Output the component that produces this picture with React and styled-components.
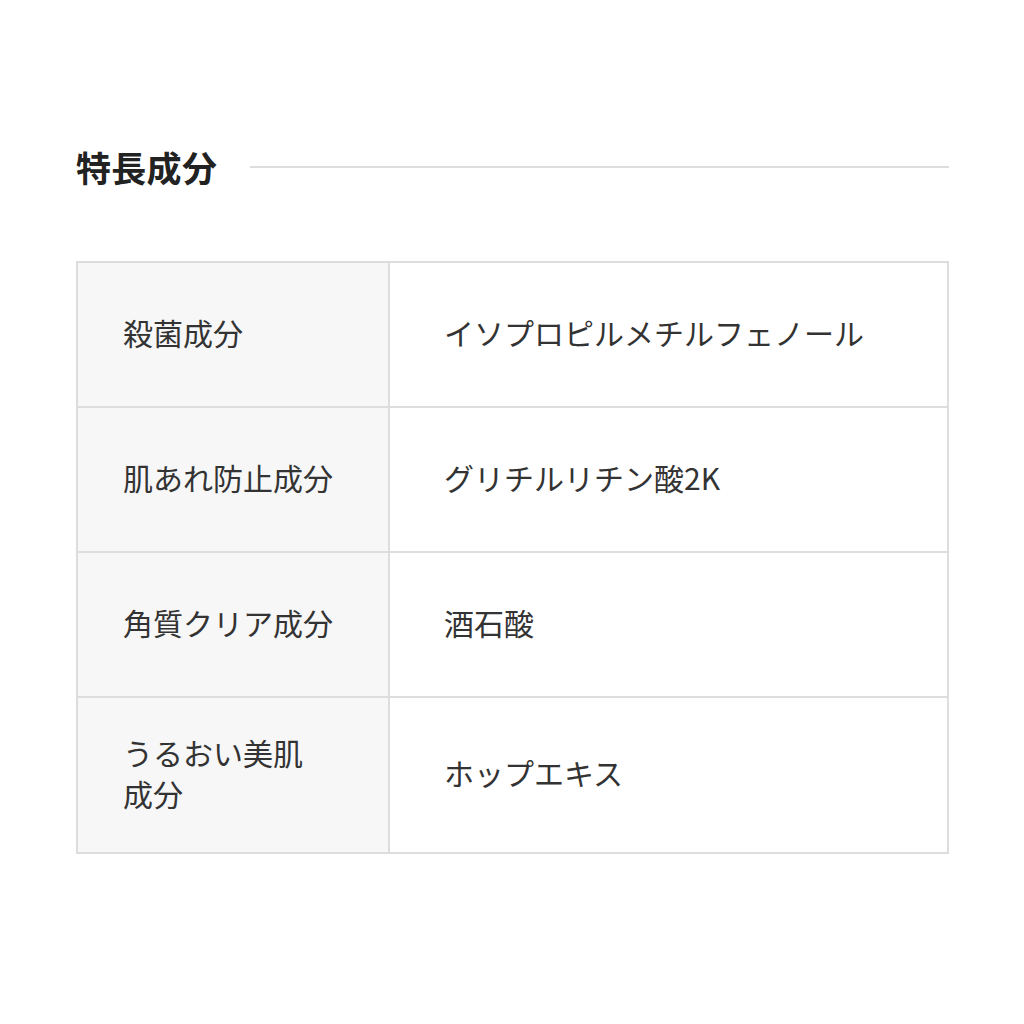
import React from "react";
import styled, { createGlobalStyle } from "styled-components";

const GlobalStyle = createGlobalStyle`
  html, body {
    margin: 0;
    padding: 0;
    background: #fff;
  }
  body {
    font-family: "Noto Sans CJK JP", "Noto Sans", sans-serif;
    color: #333;
  }
`;

// label parts: the last part is kept on one line (成分 never splits)
const ingredients = [
  { label: ["殺菌成分"], value: "イソプロピルメチルフェノール" },
  { label: ["肌あれ防止", "成分"], value: "グリチルリチン酸2K" },
  { label: ["角質クリア", "成分"], value: "酒石酸" },
  { label: ["うるおい美肌", "成分"], value: "ホップエキス" },
];

function App() {
  return (
    <>
      <GlobalStyle />
      <Section>
        <TitleRow>
          <Title>特長成分</Title>
          <Rule />
        </TitleRow>
        <Table>
          {ingredients.map((item) => (
            <Row key={item.value}>
              <Label>
                <span>
                  {item.label.map((part) => (
                    <Chunk key={part}>{part}</Chunk>
                  ))}
                </span>
              </Label>
              <Value>{item.value}</Value>
            </Row>
          ))}
        </Table>
      </Section>
    </>
  );
}

export default App;

const Section = styled.section`
  padding: 140px 75px 0 76px;
`;

const TitleRow = styled.div`
  display: flex;
  align-items: center;
  gap: 33px;
  height: 52px;
`;

const Title = styled.h2`
  margin: 0;
  font-size: 35px;
  font-weight: 700;
  color: #222;
  letter-spacing: 0.3px;
  white-space: nowrap;
`;

const Rule = styled.div`
  flex: 1;
  height: 2px;
  background: #dddddd;
  margin-top: 1px;
`;

const Table = styled.div`
  margin-top: 69px;
  border: 2px solid #dddddd;
  border-bottom: none;
`;

const Row = styled.div`
  display: grid;
  grid-template-columns: 312px 1fr;
  min-height: 143px;
  border-bottom: 2px solid #dddddd;
`;

const Label = styled.div`
  display: flex;
  align-items: center;
  padding: 34px 45px 37px;
  background: #f7f7f7;
  border-right: 2px solid #dddddd;
  font-size: 30px;
  line-height: 1.38;
  color: #333;
`;

const Chunk = styled.span`
  white-space: nowrap;
`;

const Value = styled.div`
  display: flex;
  align-items: center;
  padding: 33px 54px 37px;
  background: #fff;
  font-size: 30px;
  line-height: 1.38;
  color: #333;
`;
